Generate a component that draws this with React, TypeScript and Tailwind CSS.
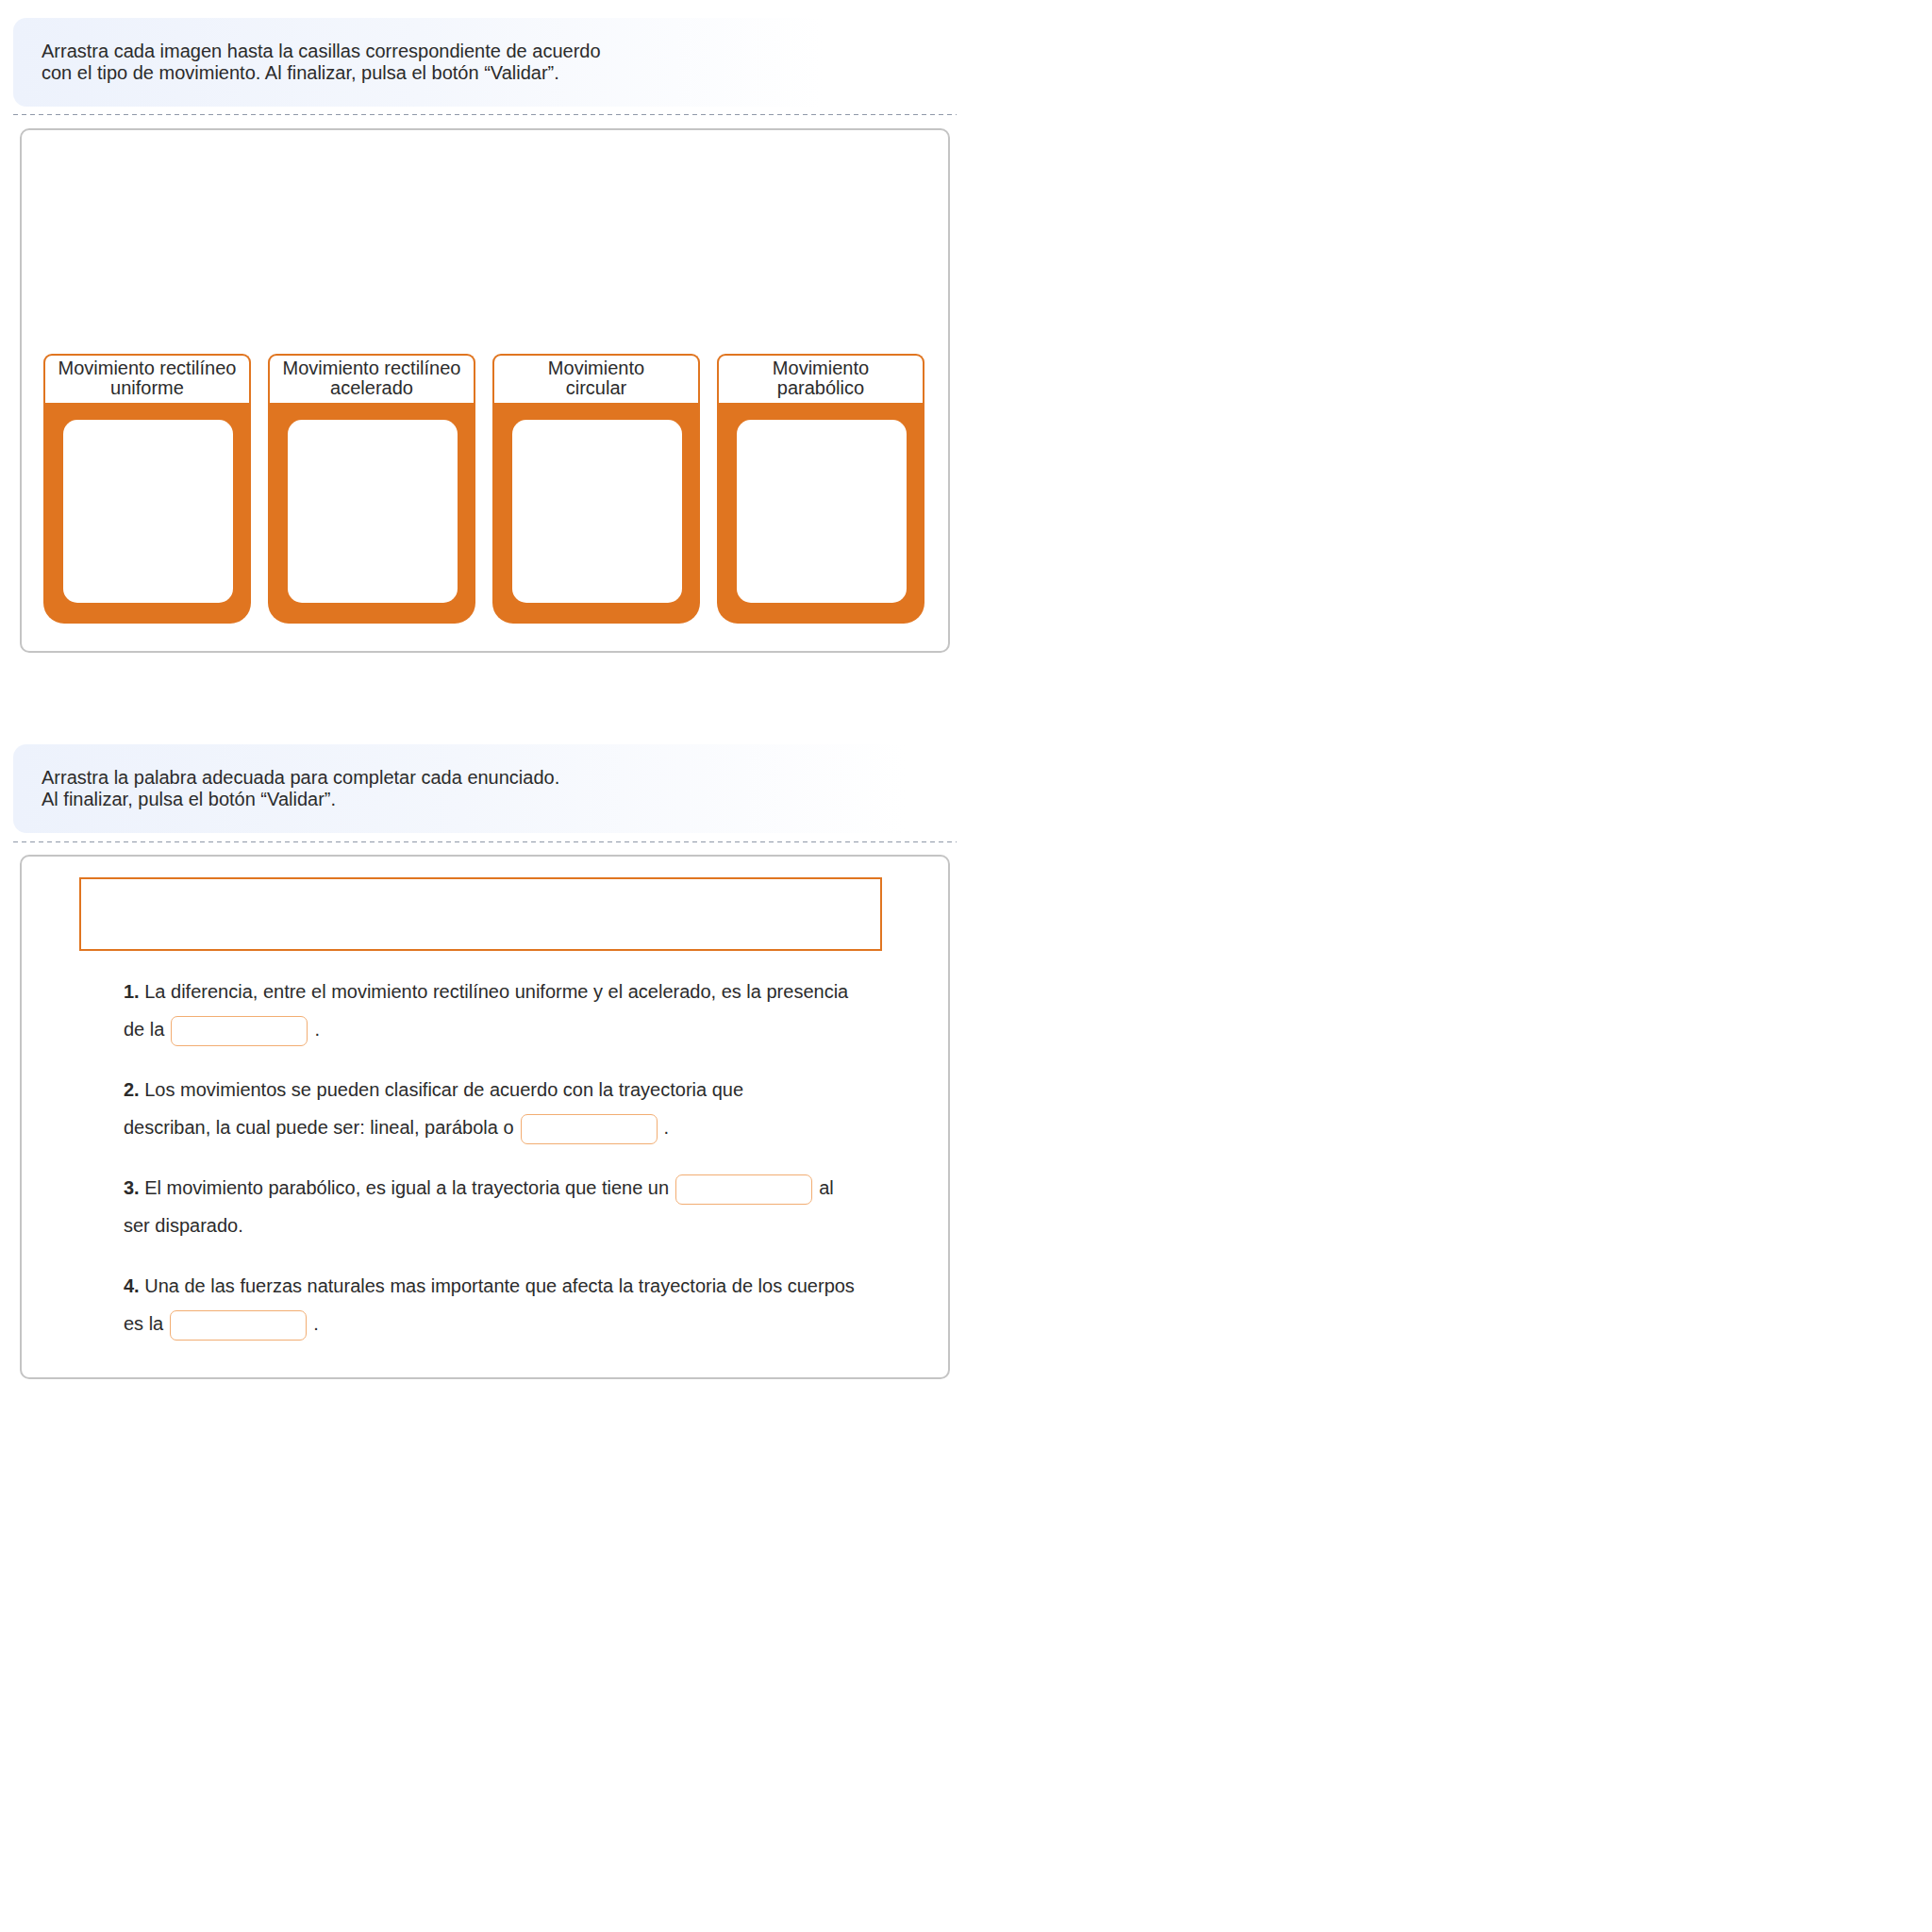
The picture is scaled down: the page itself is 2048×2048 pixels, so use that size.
import React from "react";

const font = { fontFamily: '"Liberation Sans", Arial, sans-serif' };

function Instruction({ lines, width }: { lines: string[]; width: string }) {
  return (
    <div
      className={`${width} h-[94px] rounded-l-[14px] bg-gradient-to-r from-[#edf2fc] via-[#f4f7fd] to-white pl-[30px] flex flex-col justify-center text-[20px] leading-[23.5px] text-[#2b2b2b]`}
    >
      {lines.map((l, i) => (
        <div key={i}>{l}</div>
      ))}
    </div>
  );
}

function Dashed() {
  return (
    <div className="w-[1000px] h-px bg-[repeating-linear-gradient(to_right,#8f98a8_0px,#8f98a8_5px,transparent_5px,transparent_9px)]" />
  );
}

function Card({ title }: { title: string[] }) {
  return (
    <div className="w-[220px] h-[286px] flex flex-col">
      <div className="h-[52px] rounded-t-[9px] border-2 border-b-0 border-[#e07520] bg-white pt-[3px] text-center text-[20px] leading-[21px] text-[#2b2b2b]">
        {title.map((t, i) => (
          <div key={i}>{t}</div>
        ))}
      </div>
      <div className="flex-1 bg-[#e07520] rounded-b-[22px] pt-[18px] pb-[22px] pl-[21px] pr-[19px]">
        <div className="h-full bg-white rounded-[15px]" />
      </div>
    </div>
  );
}

function Blank() {
  return (
    <span className="inline-block align-middle w-[145px] h-[32px] rounded-[7px] border border-[#f2ad72] bg-white mx-[7px]" />
  );
}

function Line({ children }: { children: React.ReactNode }) {
  return <div className="h-[40px] leading-[40px] whitespace-nowrap">{children}</div>;
}

export default function App() {
  return (
    <div className="bg-white min-h-[2048px] w-[2048px] pt-[19px] pl-[14px]" style={font}>
      <Instruction
        width="w-[858px]"
        lines={[
          "Arrastra cada imagen hasta la casillas correspondiente de acuerdo",
          "con el tipo de movimiento. Al finalizar, pulsa el botón “Validar”.",
        ]}
      />
      <div className="mt-[8px]">
        <Dashed />
      </div>
      <div className="ml-[7px] mt-[14px] w-[986px] h-[556px] rounded-[10px] border-2 border-[#c4c4c4] pl-[23px] pt-[237px]">
        <div className="flex gap-[18px]">
          <Card title={["Movimiento rectilíneo", "uniforme"]} />
          <Card title={["Movimiento rectilíneo", "acelerado"]} />
          <Card title={["Movimiento", "circular"]} />
          <Card title={["Movimiento", "parabólico"]} />
        </div>
      </div>

      <div className="mt-[97px]">
        <Instruction
          width="w-[946px]"
          lines={[
            "Arrastra la palabra adecuada para completar cada enunciado.",
            "Al finalizar, pulsa el botón “Validar”.",
          ]}
        />
      </div>
      <div className="mt-[9px]">
        <Dashed />
      </div>
      <div className="ml-[7px] mt-[13px] w-[986px] h-[556px] rounded-[10px] border-2 border-[#c4c4c4] pt-[22px]">
        <div className="ml-[61px] w-[851px] h-[78px] border-2 border-[#e07520]" />
        <div className="ml-[108px] mt-[23px] text-[20px] text-[#2b2b2b] flex flex-col gap-[24px]">
          <div>
            <Line>
              <b>1.</b> La diferencia, entre el movimiento rectilíneo uniforme y el acelerado, es la presencia
            </Line>
            <Line>
              de la
              <Blank />.
            </Line>
          </div>
          <div>
            <Line>
              <b>2.</b> Los movimientos se pueden clasificar de acuerdo con la trayectoria que
            </Line>
            <Line>
              describan, la cual puede ser: lineal, parábola o
              <Blank />.
            </Line>
          </div>
          <div>
            <Line>
              <b>3.</b> El movimiento parabólico, es igual a la trayectoria que tiene un
              <Blank />al
            </Line>
            <Line>ser disparado.</Line>
          </div>
          <div>
            <Line>
              <b>4.</b> Una de las fuerzas naturales mas importante que afecta la trayectoria de los cuerpos
            </Line>
            <Line>
              es la
              <Blank />.
            </Line>
          </div>
        </div>
      </div>
    </div>
  );
}
